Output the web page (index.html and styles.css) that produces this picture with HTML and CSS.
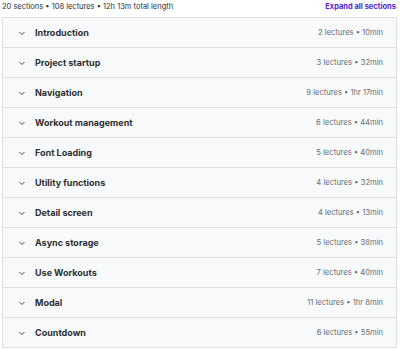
FILE: index.html
```html
<!DOCTYPE html>
<html lang="en">
<head>
    <meta charset="UTF-8">
    <meta name="viewport" content="width=device-width, initial-scale=1.0">
    <title>Course content</title>
    <link rel="stylesheet" href="styles.css">
</head>
<body>

    <div class="summary">
        <span>20 sections • 108 lectures • 12h 13m total length</span>
        <a href="#" class="expand">Expand all sections</a>
    </div>

    <div class="sections">
        <div class="section">
            <div class="title"><svg class="chevron" viewBox="0 0 10 10"><path d="M2.5 4 L5 6.5 L7.5 4"/></svg>Introduction</div>
            <div class="meta">2 lectures • 10min</div>
        </div>
        <div class="section">
            <div class="title"><svg class="chevron" viewBox="0 0 10 10"><path d="M2.5 4 L5 6.5 L7.5 4"/></svg>Project startup</div>
            <div class="meta">3 lectures • 32min</div>
        </div>
        <div class="section">
            <div class="title"><svg class="chevron" viewBox="0 0 10 10"><path d="M2.5 4 L5 6.5 L7.5 4"/></svg>Navigation</div>
            <div class="meta">9 lectures • 1hr 17min</div>
        </div>
        <div class="section">
            <div class="title"><svg class="chevron" viewBox="0 0 10 10"><path d="M2.5 4 L5 6.5 L7.5 4"/></svg>Workout management</div>
            <div class="meta">6 lectures • 44min</div>
        </div>
        <div class="section">
            <div class="title"><svg class="chevron" viewBox="0 0 10 10"><path d="M2.5 4 L5 6.5 L7.5 4"/></svg>Font Loading</div>
            <div class="meta">5 lectures • 40min</div>
        </div>
        <div class="section">
            <div class="title"><svg class="chevron" viewBox="0 0 10 10"><path d="M2.5 4 L5 6.5 L7.5 4"/></svg>Utility functions</div>
            <div class="meta">4 lectures • 32min</div>
        </div>
        <div class="section">
            <div class="title"><svg class="chevron" viewBox="0 0 10 10"><path d="M2.5 4 L5 6.5 L7.5 4"/></svg>Detail screen</div>
            <div class="meta">4 lectures • 13min</div>
        </div>
        <div class="section">
            <div class="title"><svg class="chevron" viewBox="0 0 10 10"><path d="M2.5 4 L5 6.5 L7.5 4"/></svg>Async storage</div>
            <div class="meta">5 lectures • 38min</div>
        </div>
        <div class="section">
            <div class="title"><svg class="chevron" viewBox="0 0 10 10"><path d="M2.5 4 L5 6.5 L7.5 4"/></svg>Use Workouts</div>
            <div class="meta">7 lectures • 40min</div>
        </div>
        <div class="section">
            <div class="title"><svg class="chevron" viewBox="0 0 10 10"><path d="M2.5 4 L5 6.5 L7.5 4"/></svg>Modal</div>
            <div class="meta">11 lectures • 1hr 8min</div>
        </div>
        <div class="section">
            <div class="title"><svg class="chevron" viewBox="0 0 10 10"><path d="M2.5 4 L5 6.5 L7.5 4"/></svg>Countdown</div>
            <div class="meta">6 lectures • 55min</div>
        </div>
    </div>

</body>
</html>
```

FILE: styles.css
```css
body {
    margin: 0;
    padding: 0 3px 0 2px;
    font-family: Inter, "Noto Sans", sans-serif;
    color: #2d2f31;
    background-color: #fff;
}
.summary {
    display: flex;
    justify-content: space-between;
    height: 17px;
    line-height: 13px;
    font-size: 7.5px;
    color: #2d2f31;
}
.expand {
    color: #5624d0;
    font-weight: 700;
    text-decoration: none;
    margin-right: 1px;
}
.sections {
    border: 1px solid #dde1e4;
    border-bottom: none;
}
.section {
    display: flex;
    justify-content: space-between;
    align-items: center;
    height: 29px;
    padding: 0 13px 0 14px;
    background-color: #f7f9fa;
    border-bottom: 1px solid #dde1e4;
}
.title {
    display: flex;
    align-items: center;
    font-size: 9px;
    font-weight: 700;
}
.chevron {
    width: 10px;
    height: 10px;
    margin-right: 8px;
    fill: none;
    stroke: #4a4d50;
    stroke-width: 1;
}
.meta {
    font-size: 7.6px;
    color: #6a6f73;
}
```
